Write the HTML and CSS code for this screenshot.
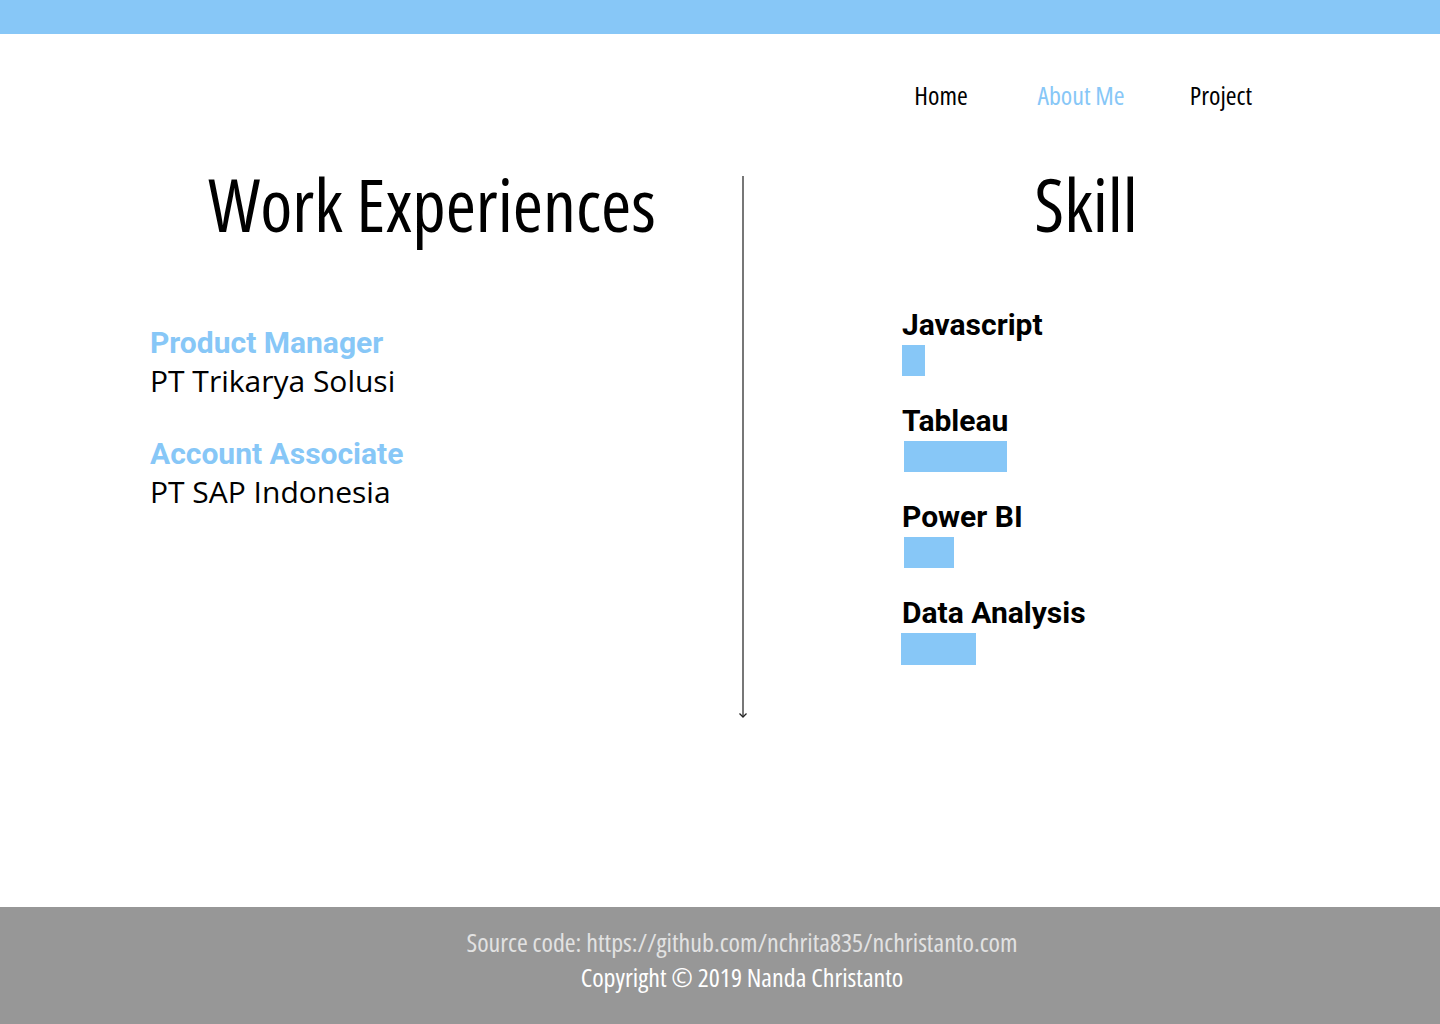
FILE: index.html
```html
<!DOCTYPE html>
<html lang="en">
<head>
<meta charset="utf-8">
<title>About Me - Nanda Christanto</title>
<link rel="stylesheet" href="styles.css">
</head>
<body>
<div class="topbar"></div>
<nav class="nav">
  <a class="nav-link" href="#">Home</a>
  <a class="nav-link active" href="#">About Me</a>
  <a class="nav-link" href="#">Project</a>
</nav>
<main class="main">
  <section class="work">
    <h1 class="title">Work Experiences</h1>
    <div class="jobs">
      <div class="job">
        <div class="job-title">Product Manager</div>
        <div class="job-company">PT Trikarya Solusi</div>
      </div>
      <div class="job">
        <div class="job-title">Account Associate</div>
        <div class="job-company">PT SAP Indonesia</div>
      </div>
    </div>
  </section>
  <div class="divider">
    <div class="divider-line"></div>
    <svg class="divider-arrow" width="10" height="6" viewBox="0 0 10 6"><path d="M1.5 1.5 L5 5 L8.5 1.5" fill="none" stroke="#222" stroke-width="1.3"/></svg>
  </div>
  <section class="skills">
    <h1 class="title">Skill</h1>
    <div class="skill-list">
      <div class="skill">
        <div class="skill-name">Javascript</div>
        <div class="bar" style="width:23px;margin-left:0px"></div>
      </div>
      <div class="skill">
        <div class="skill-name">Tableau</div>
        <div class="bar" style="width:103px;margin-left:2px"></div>
      </div>
      <div class="skill">
        <div class="skill-name">Power BI</div>
        <div class="bar" style="width:50px;margin-left:2px"></div>
      </div>
      <div class="skill">
        <div class="skill-name">Data Analysis</div>
        <div class="bar bar-tall" style="width:75px;margin-left:-1px"></div>
      </div>
    </div>
  </section>
</main>
<footer class="footer">
  <div class="source">Source code: https://github.com/nchrita835/nchristanto.com</div>
  <div class="copyright">Copyright © 2019 Nanda Christanto</div>
</footer>
</body>
</html>
```
FILE: styles.css
```css
html, body {
  margin: 0;
  padding: 0;
  background: #ffffff;
}
body {
  width: 1440px;
  height: 1024px;
  display: flex;
  flex-direction: column;
  font-family: "Open Sans", sans-serif;
}
.condensed,
.nav-link,
.title,
.footer {
  font-family: "Open Sans", sans-serif;
  font-stretch: 75%;
  font-weight: 500;
}
.topbar {
  height: 34px;
  flex: none;
  background: #87c7f7;
}
.nav {
  display: flex;
  flex: none;
  justify-content: flex-end;
  padding: 44px 149px 0 0;
  height: 34px;
}
.nav-link {
  width: 140px;
  text-align: center;
  font-size: 26px;
  line-height: 34px;
  color: #000;
  text-decoration: none;
}
.nav-link.active {
  color: #87c7f7;
}
.main {
  display: flex;
  flex: 1;
  padding-top: 47px;
}
.work {
  width: 564px;
  margin-left: 150px;
  margin-right: 28px;
}
.title {
  margin: 0;
  font-size: 73px;
  line-height: 90px;
  text-align: center;
  white-space: nowrap;
  color: #000;
}
.jobs {
  margin-top: 74px;
  display: flex;
  flex-direction: column;
  gap: 35px;
}
.job-title {
  font-family: Roboto, sans-serif;
  font-weight: bold;
  font-size: 30px;
  line-height: 39px;
  color: #87c7f7;
}
.job-company {
  font-family: "Open Sans", sans-serif;
  font-size: 30px;
  line-height: 37px;
  color: #000;
}
.divider {
  display: flex;
  flex-direction: column;
  align-items: center;
  width: 10px;
  margin-left: -4px;
  margin-top: 17px;
  height: 542px;
}
.divider-line {
  width: 2px;
  flex: 1;
  background: #777;
}
.divider-arrow {
  display: block;
  margin-top: -5px;
}
.skills {
  flex: 1;
  padding-right: 16px;
}
.skill-list {
  margin-left: 154px;
  margin-top: 57px;
  display: flex;
  flex-direction: column;
  gap: 26px;
}
.skill-name {
  font-family: Roboto, sans-serif;
  font-weight: bold;
  font-size: 30px;
  line-height: 38px;
  color: #000;
}
.bar {
  height: 31px;
  margin-top: 1px;
  background: #87c7f7;
}
.bar-tall {
  height: 32px;
}
.footer {
  height: 117px;
  flex: none;
  background: #979797;
  padding-left: 44px;
  box-sizing: border-box;
  padding-top: 18px;
  text-align: center;
  font-size: 26px;
  line-height: 35px;
}
.source {
  color: #e2e2e2;
}
.copyright {
  color: #ffffff;
}
```
